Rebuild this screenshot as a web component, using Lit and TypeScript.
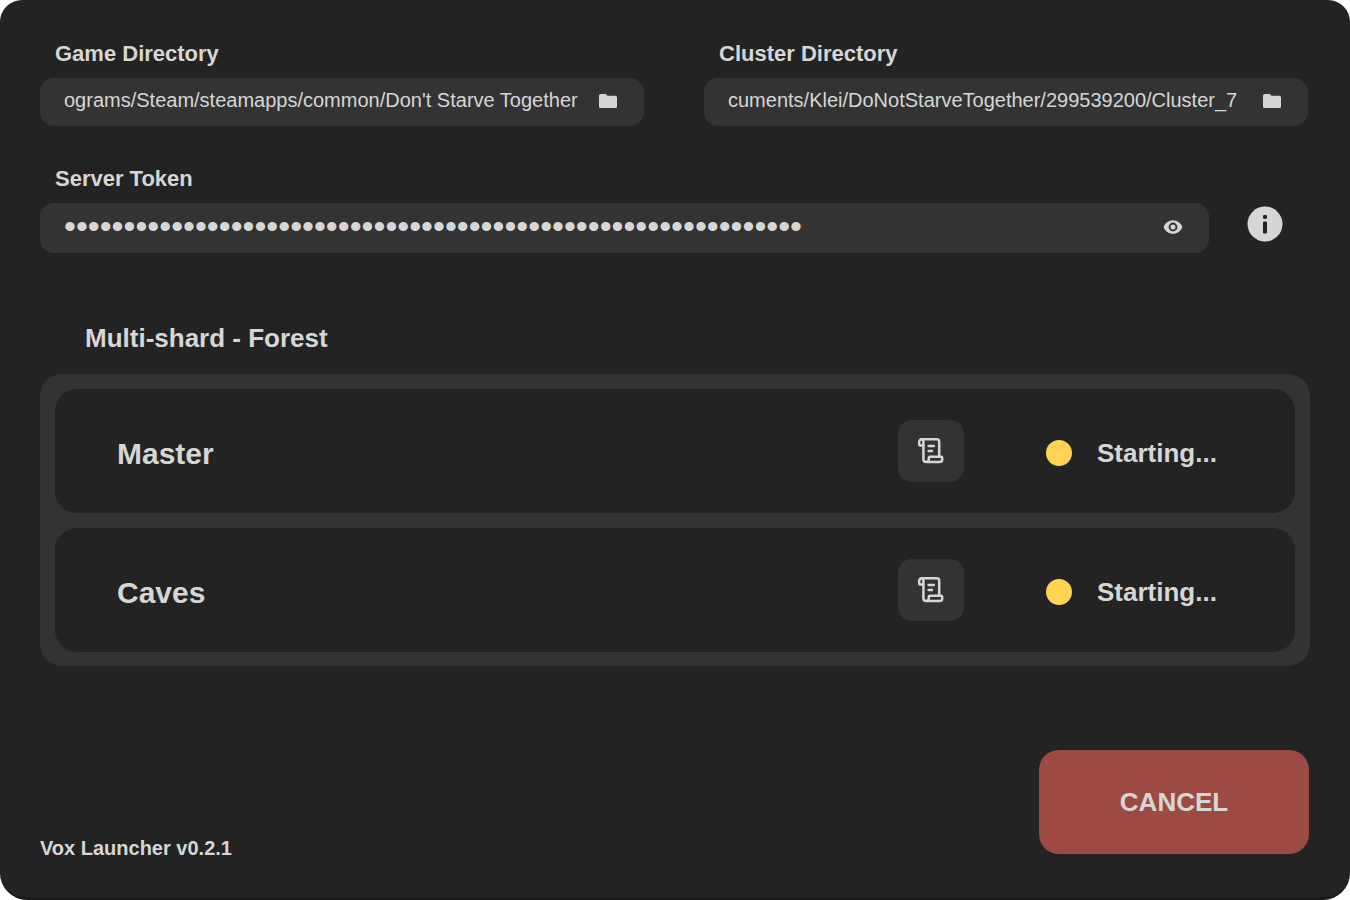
import { LitElement, html, css, svg } from "lit";
import { customElement, property, state } from "lit/decorators.js";

const folderIcon = svg`<svg class="folder" viewBox="0 0 20 16" aria-hidden="true">
  <path d="M2.600 1h4.600q.7 0 1.100.5l.9 1q.3.3.8.3h7.400q1.600 0 1.600 1.600v9q0 1.600-1.600 1.600H2.600Q1 15 1 13.400V2.600Q1 1 2.600 1z" fill="currentColor"/>
</svg>`;

const eyeIcon = svg`<svg class="eye" viewBox="0 0 24 24" aria-hidden="true">
  <path fill="currentColor" fill-rule="evenodd" d="M12 3.800C7 3.800 2.400 7.300.7 12c1.700 4.700 6.300 8.200 11.300 8.200s9.600-3.500 11.300-8.200C21.600 7.300 17 3.800 12 3.800zM12 17.300a5.300 5.300 0 1 1 0-10.600 5.300 5.300 0 0 1 0 10.600zm0-8.300a3 3 0 1 0 0 6 3 3 0 0 0 0-6z"/>
</svg>`;

const infoIcon = svg`<svg class="info-icon" viewBox="0 0 36 36" aria-hidden="true">
  <circle cx="18" cy="18" r="17.500" fill="#d6d6d6"/>
  <circle cx="18" cy="10.900" r="2.200" fill="#232323"/>
  <rect x="16" y="15.500" width="4" height="12" rx="1.200" fill="#232323"/>
</svg>`;

const scrollIcon = svg`<svg class="scroll" viewBox="0 0 28 28" fill="none" stroke="currentColor" stroke-width="2.500" stroke-linecap="round" stroke-linejoin="round" aria-hidden="true">
  <path d="M6.400 8.400H3.200a1 1 0 0 1-1-1V5.200a2.600 2.600 0 0 1 2.600-2.900h15a2.400 2.400 0 0 1 2.400 2.400v15.100"/>
  <path d="M4.600 2.300a2 2 0 0 1 1.800 2v18a2.700 2.700 0 0 0 2.700 2.700h13.500a2.600 2.600 0 0 0 2.600-2.600v-1.600a1 1 0 0 0-1-1H12.800a1 1 0 0 0-1 1v1.500a2.700 2.700 0 0 1-2.700 2.700"/>
  <path d="M11.600 9h5.200M11.600 14h3.400"/>
</svg>`;

const base = css`
  * { box-sizing: border-box; }
  button {
    border: 0;
    padding: 0;
    color: inherit;
    font: inherit;
    background: none;
    cursor: pointer;
  }
  svg { display: block; }
`;

@customElement("shard-row")
export class ShardRow extends LitElement {
  @property() name = "";
  @property() status = "";

  static styles = [base, css`
    :host {
      display: flex;
      align-items: center;
      height: 124px;
      padding: 0 30px 0 62px;
      border-radius: 22px;
      background: #232323;
    }
    .name {
      flex: 1;
      margin: 0;
      padding-top: 6px;
      font-size: 30px;
      line-height: 36px;
    }
    .log {
      display: grid;
      place-items: center;
      width: 66px;
      height: 62px;
      border-radius: 14px;
      background: #333333;
    }
    .scroll { width: 28px; height: 28px; }
    .status {
      display: flex;
      align-items: center;
      gap: 25px;
      width: 219px;
      margin-left: 82px;
      padding-top: 4px;
      font-size: 26px;
      font-weight: bold;
      line-height: 30px;
    }
    .dot {
      width: 26px;
      height: 26px;
      border-radius: 50%;
      background: #ffd354;
    }
  `];

  render() {
    return html`
      <h3 class="name">${this.name}</h3>
      <button class="log" type="button" aria-label="Show ${this.name} log">${scrollIcon}</button>
      <div class="status" role="status"><span class="dot"></span>${this.status}</div>
    `;
  }
}

@customElement("app-root")
export class AppRoot extends LitElement {
  @state() private revealed = false;

  private shards = [
    { name: "Master", status: "Starting..." },
    { name: "Caves", status: "Starting..." },
  ];

  static styles = [base, css`
    :host {
      display: block;
      background: #ffffff;
      color: #d6d6d6;
      font-family: "Liberation Sans", Arial, sans-serif;
    }
    .window {
      display: flex;
      flex-direction: column;
      min-height: 100vh;
      padding: 42px 40px 43px;
      border-bottom: 3px solid #1b191a;
      border-radius: 22px 22px 27px 27px;
      background: #232323;
    }
    .form {
      display: grid;
      grid-template-columns: 1fr 1fr;
      gap: 41px 60px;
      padding-right: 2px;
    }
    .field {
      display: flex;
      flex-direction: column;
      gap: 12px;
    }
    .field label {
      padding-left: 15px;
      font-size: 22px;
      font-weight: bold;
      line-height: 24px;
    }
    .wide { grid-column: 1 / -1; }
    .line { display: flex; align-items: center; gap: 38px; }
    .box {
      display: flex;
      align-items: center;
      height: 48px;
      padding: 0 26px 2px 24px;
      border-radius: 14px;
      background: #333333;
    }
    .token { flex: 1; height: 50px; }
    .box input {
      flex: 1;
      min-width: 0;
      height: 44px;
      border: 0;
      padding: 0 0 2px;
      outline: 0;
      background: none;
      color: inherit;
      font-family: inherit;
      font-size: 20px;
    }
    .token input[type="password"] { font-size: 34px; }
    .folder { width: 20px; height: 16px; }
    .eye { width: 20px; height: 20px; }
    .info { margin-right: 25px; padding-bottom: 8px; }
    .info-icon { width: 36px; height: 36px; }
    .world {
      margin: 70px 0 21px;
      padding-left: 45px;
      font-size: 26px;
      line-height: 30px;
    }
    .shards {
      display: grid;
      gap: 15px;
      padding: 15px 15px 14px;
      border-radius: 22px;
      background: #333333;
    }
    .footer {
      display: flex;
      justify-content: space-between;
      align-items: flex-end;
      margin-top: auto;
      padding-right: 1px;
    }
    .version {
      margin-bottom: -6px;
      font-size: 20px;
      font-weight: bold;
      line-height: 24px;
    }
    .cancel {
      width: 270px;
      height: 104px;
      border-radius: 20px;
      background: #9d4a44;
      font-size: 26px;
      font-weight: bold;
    }
  `];

  private directory(id: string, label: string, value: string) {
    return html`
      <div class="field">
        <label for=${id}>${label}</label>
        <div class="box">
          <input id=${id} type="text" spellcheck="false" .value=${value}>
          <button type="button" aria-label="Browse ${label}">${folderIcon}</button>
        </div>
      </div>
    `;
  }

  render() {
    return html`
      <main class="window">
        <form class="form">
          ${this.directory("game", "Game Directory", "ograms/Steam/steamapps/common/Don't Starve Together")}
          ${this.directory("cluster", "Cluster Directory", "cuments/Klei/DoNotStarveTogether/299539200/Cluster_7")}
          <div class="field wide">
            <label for="token">Server Token</label>
            <div class="line">
              <div class="box token">
                <input id="token" type=${this.revealed ? "text" : "password"} autocomplete="off" .value=${"x".repeat(62)}>
                <button type="button" aria-label="Show token" @click=${() => (this.revealed = !this.revealed)}>${eyeIcon}</button>
              </div>
              <button class="info" type="button" aria-label="About the server token">${infoIcon}</button>
            </div>
          </div>
        </form>
        <h2 class="world">Multi-shard - Forest</h2>
        <section class="shards">
          ${this.shards.map((s) => html`<shard-row name=${s.name} status=${s.status}></shard-row>`)}
        </section>
        <footer class="footer">
          <span class="version">Vox Launcher v0.2.1</span>
          <button class="cancel" type="button">CANCEL</button>
        </footer>
      </main>
    `;
  }
}
